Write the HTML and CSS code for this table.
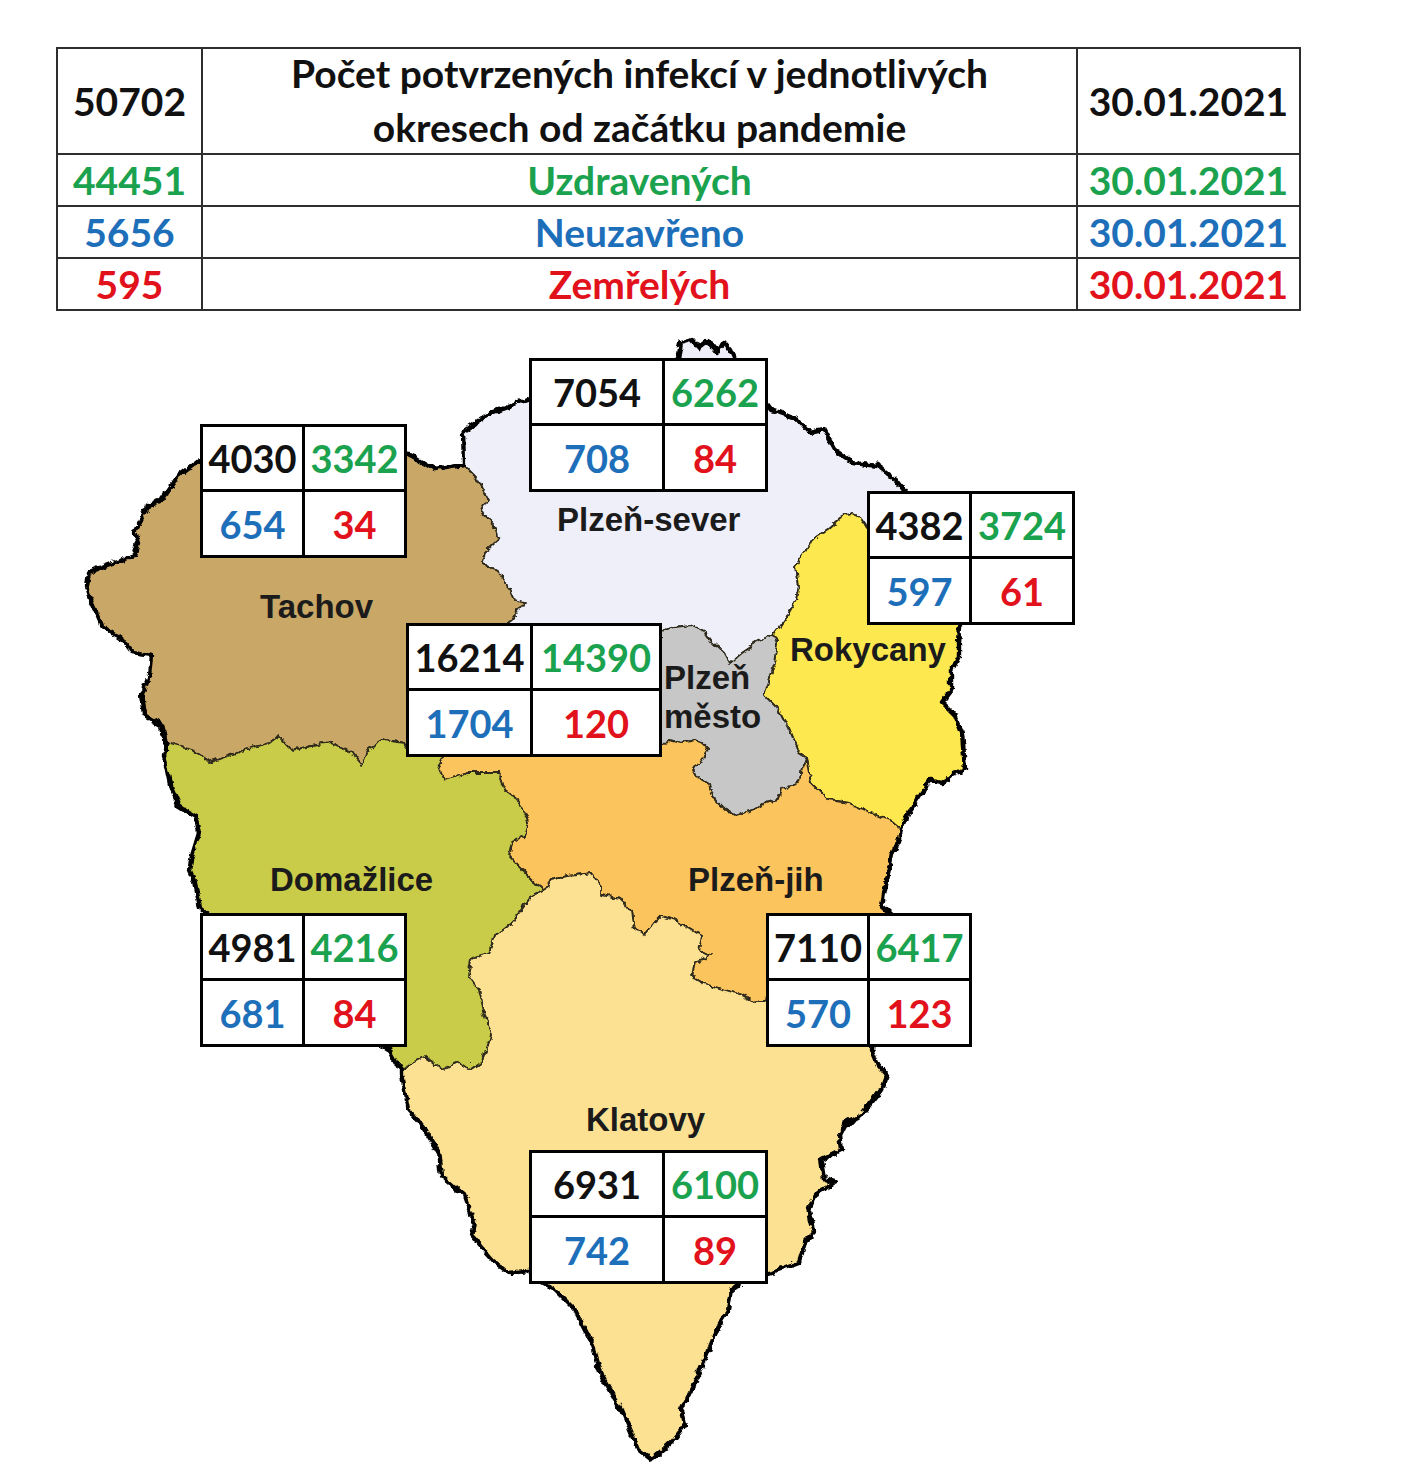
FILE: index.html
```html
<!DOCTYPE html>
<html lang="cs">
<head>
<meta charset="utf-8">
<title>Plzeňský kraj – počet potvrzených infekcí</title>
<link rel="stylesheet" href="styles.css">
</head>
<body>
<div class="page">
  <table class="summary">
    <colgroup><col class="col-num"><col class="col-title"><col class="col-date"></colgroup>
    <tr class="head">
      <td>50702</td>
      <td class="title"><span class="title-inner">Počet potvrzených infekcí v jednotlivých<br>okresech od začátku pandemie</span></td>
      <td>30.01.2021</td>
    </tr>
    <tr class="green"><td>44451</td><td>Uzdravených</td><td>30.01.2021</td></tr>
    <tr class="blue"><td>5656</td><td>Neuzavřeno</td><td>30.01.2021</td></tr>
    <tr class="red"><td>595</td><td>Zemřelých</td><td>30.01.2021</td></tr>
  </table>

  <div class="map">
    <svg class="regions" width="1405" height="1162" viewBox="0 320 1405 1162" xmlns="http://www.w3.org/2000/svg">
      <defs>
        <filter id="rough" x="0" y="320" width="1405" height="1162" filterUnits="userSpaceOnUse">
          <feTurbulence type="turbulence" baseFrequency="0.08" numOctaves="2" seed="7" result="noise"/>
          <feDisplacementMap in="SourceGraphic" in2="noise" scale="6" xChannelSelector="R" yChannelSelector="G"/>
        </filter>
      </defs>
      <g class="land" filter="url(#rough)">
        <g class="inner">
          <polygon class="r-tachov" points="462,462 473,473 487,497 480,510 493,523 497,537 483,550 480,560 497,570 507,583 513,597 523,600 510,617 503,622 520,700 406,745 403,740 383,737 367,747 360,763 350,750 330,740 310,743 290,747 277,733 267,740 243,747 227,753 207,760 190,747 165,740 160,723 143,713 140,693 148,673 150,653 130,650 120,637 100,623 90,600 85,583 87,570 113,560 133,553 137,540 133,530 147,503 160,497 177,473 198,457 300,440 407,452 413,455 433,467"/>
          <polygon class="r-sever" points="462,462 461,430 490,410 526,397 560,385 640,370 676,357 679,340 690,337 697,345 706,338 715,350 722,340 729,348 733,357 760,395 769,407 797,417 808,430 822,427 833,447 851,460 876,463 894,477 904,490 890,515 867,527 857,513 850,510 840,515 826,527 811,537 804,550 794,563 797,583 794,597 783,617 772,632 755,640 740,650 728,660 722,650 711,640 704,630 690,623 672,625 663,628 520,700 503,622 510,617 523,600 513,597 507,583 497,570 480,560 483,550 497,537 493,523 480,510 487,497 473,473"/>
          <polygon class="r-rokycany" points="890,515 958,624 957,640 957,653 950,667 950,687 940,700 953,713 960,730 963,767 950,773 940,780 930,778 920,790 907,810 900,827 887,817 870,810 847,800 827,797 810,780 805,755 797,750 787,727 780,713 775,705 763,693 768,675 773,660 776,640 772,632 783,617 794,597 797,583 794,563 804,550 811,537 826,527 840,515 850,510 857,513 867,527"/>
          <polygon class="r-mesto" points="663,628 672,625 690,623 704,630 711,640 722,650 728,660 740,650 755,640 772,632 776,640 773,660 768,675 763,693 775,705 780,713 787,727 797,750 805,755 800,767 797,780 780,787 777,797 763,800 750,807 733,813 723,807 713,797 707,783 697,777 693,767 700,757 707,747 700,740 693,737 680,740 667,737 663,742 600,720"/>
          <polygon class="r-jih" points="805,755 810,780 827,797 847,800 870,810 887,817 900,827 897,840 890,853 883,887 880,903 890,912 875,1000 767,997 753,1000 740,993 720,987 707,983 690,973 693,960 710,953 697,947 700,933 690,927 673,917 660,913 653,920 643,933 633,927 630,910 620,897 600,893 600,883 590,870 567,873 550,877 543,887 533,880 520,867 507,853 510,840 523,833 527,820 517,797 503,787 497,770 467,770 443,777 437,763 440,756 520,700 663,742 667,737 680,740 693,737 700,740 707,747 700,757 693,767 697,777 707,783 713,797 723,807 733,813 750,807 763,800 777,797 780,787 797,780 800,767"/>
          <polygon class="r-klatovy" points="543,887 550,877 567,873 590,870 600,883 600,893 620,897 630,910 633,927 643,933 653,920 660,913 673,917 690,927 700,933 697,947 710,953 693,960 690,973 707,983 720,987 740,993 753,1000 767,997 875,1000 870,1047 877,1063 885,1073 880,1087 870,1100 860,1113 843,1123 838,1133 840,1147 820,1157 823,1177 833,1180 815,1190 807,1207 813,1230 803,1240 797,1260 770,1270 740,1280 730,1287 727,1307 717,1323 710,1340 697,1373 680,1407 683,1423 670,1440 650,1457 637,1447 620,1407 600,1373 590,1340 573,1307 553,1287 540,1280 527,1268 507,1270 490,1257 470,1233 473,1220 463,1193 440,1173 437,1150 423,1127 407,1107 400,1073 400,1068 410,1060 423,1053 440,1067 457,1060 470,1067 480,1060 483,1053 490,1033 483,1013 477,987 467,973 470,957 487,950 493,933 510,920 520,907 530,893"/>
          <polygon class="r-domazlice" points="165,740 190,747 207,760 227,753 243,747 267,740 277,733 290,747 310,743 330,740 350,750 360,763 367,747 383,737 403,740 406,745 520,700 440,756 437,763 443,777 467,770 497,770 503,787 517,797 527,820 523,833 510,840 507,853 520,867 533,880 543,887 530,893 520,907 510,920 493,933 487,950 470,957 467,973 477,987 483,1013 490,1033 483,1053 480,1060 470,1067 457,1060 440,1067 423,1053 410,1060 400,1068 390,1050 385,1046 300,1000 198,905 197,900 193,880 187,867 190,853 197,830 193,813 177,803 170,787 167,773 163,753"/>
        </g>
        <polygon class="outline" points="165,740 163,740 160,723 143,713 140,693 148,673 150,653 130,650 120,637 100,623 90,600 85,583 87,570 113,560 133,553 137,540 133,530 147,503 160,497 177,473 198,457 300,440 407,452 413,455 433,467 462,462 461,430 490,410 526,397 560,385 640,370 676,357 679,340 690,337 697,345 706,338 715,350 722,340 729,348 733,357 760,395 769,407 797,417 808,430 822,427 833,447 851,460 876,463 894,477 904,490 890,515 958,624 957,640 957,653 950,667 950,687 940,700 953,713 960,730 963,767 950,773 940,780 930,778 920,790 907,810 900,827 897,840 890,853 883,887 880,903 890,912 875,1000 870,1047 877,1063 885,1073 880,1087 870,1100 860,1113 843,1123 838,1133 840,1147 820,1157 823,1177 833,1180 815,1190 807,1207 813,1230 803,1240 797,1260 770,1270 740,1280 730,1287 727,1307 717,1323 710,1340 697,1373 680,1407 683,1423 670,1440 650,1457 637,1447 620,1407 600,1373 590,1340 573,1307 553,1287 540,1280 527,1268 507,1270 490,1257 470,1233 473,1220 463,1193 440,1173 437,1150 423,1127 407,1107 400,1073 400,1068 390,1050 385,1046 300,1000 198,905 197,900 193,880 187,867 190,853 197,830 193,813 177,803 170,787 167,773 163,753"/>
      </g>
    </svg>

    <div class="lbl l-tachov">Tachov</div>
    <div class="lbl l-sever">Plzeň-sever</div>
    <div class="lbl l-rokycany">Rokycany</div>
    <div class="lbl l-plzen">Plzeň</div>
    <div class="lbl l-mesto">město</div>
    <div class="lbl l-domazlice">Domažlice</div>
    <div class="lbl l-jih">Plzeň-jih</div>
    <div class="lbl l-klatovy">Klatovy</div>

    <div class="box box-sm b-tachov"><span class="k">4030</span><span class="g">3342</span><span class="b">654</span><span class="r">34</span></div>
    <div class="box box-wide b-sever"><span class="k">7054</span><span class="g">6262</span><span class="b">708</span><span class="r">84</span></div>
    <div class="box box-ro b-rokycany"><span class="k">4382</span><span class="g">3724</span><span class="b">597</span><span class="r">61</span></div>
    <div class="box box-pm b-mesto"><span class="k">16214</span><span class="g">14390</span><span class="b">1704</span><span class="r">120</span></div>
    <div class="box box-sm b-domazlice"><span class="k">4981</span><span class="g">4216</span><span class="b">681</span><span class="r">84</span></div>
    <div class="box box-pj b-jih"><span class="k">7110</span><span class="g">6417</span><span class="b">570</span><span class="r">123</span></div>
    <div class="box box-wide b-klatovy"><span class="k">6931</span><span class="g">6100</span><span class="b">742</span><span class="r">89</span></div>
  </div>
</div>
</body>
</html>
```

FILE: styles.css
```css
* { box-sizing: border-box; }

body {
  margin: 0;
  background: #ffffff;
  font-family: Lato, "Open Sans", sans-serif;
  color: #111111;
}

.page { width: 1405px; }

/* ---------- summary table ---------- */
.summary {
  border-collapse: collapse;
  table-layout: fixed;
  width: 1243px;
  margin: 47px 0 0 56px;
  font-weight: 700;
  font-size: 39px;
}
.col-num { width: 145px; }
.col-title { width: 875px; }
.col-date { width: 223px; }

.summary td {
  border: 2px solid #2e2e2e;
  text-align: center;
  vertical-align: middle;
  padding: 0;
  height: 52px;
  line-height: 1;
}
.summary .head td { height: 105px; }
.summary .title { line-height: 54px; }
.title-inner { display: block; margin: -3px 0 -1px; }

.green td { color: #1ba24f; }
.blue td { color: #1e6fba; }
.red td { color: #e2121c; }

/* ---------- map canvas ---------- */
.map {
  position: relative;
  width: 1405px;
  height: 1162px;
  margin-top: 10px;
}
.regions { position: absolute; left: 0; top: 0; }
.inner polygon {
  stroke: #2f2a1c;
  stroke-width: 1.8;
  stroke-linejoin: round;
}
.r-tachov { fill: #c9a766; }
.r-sever { fill: #eeeff9; }
.r-rokycany { fill: #fde94f; }
.r-mesto { fill: #c7c7c7; }
.r-jih { fill: #fcc45c; }
.r-klatovy { fill: #fde192; }
.r-domazlice { fill: #c9cc4a; }
.outline {
  fill: none;
  stroke: #000000;
  stroke-width: 4.4;
  stroke-linejoin: round;
}

/* region names */
.lbl {
  position: absolute;
  font-family: "Liberation Sans", Arial, sans-serif;
  font-weight: 700;
  font-size: 33px;
  line-height: 33px;
  color: #1b1b1b;
  white-space: nowrap;
}
.l-tachov { left: 260px; top: 269px; }
.l-sever { left: 557px; top: 182px; }
.l-rokycany { left: 790px; top: 312px; }
.l-plzen { left: 664px; top: 340px; }
.l-mesto { left: 664px; top: 379px; }
.l-domazlice { left: 270px; top: 542px; }
.l-jih { left: 688px; top: 542px; }
.l-klatovy { left: 586px; top: 782px; }

/* stat boxes */
.box {
  position: absolute;
  display: grid;
  grid-template-rows: 62px 63px;
  gap: 3px;
  padding: 3px;
  background: #000000;
}
.box span {
  background: #ffffff;
  display: flex;
  align-items: center;
  justify-content: center;
  font-weight: 700;
  font-size: 38px;
  line-height: 1;
}
.box-sm { grid-template-columns: 99px 99px; }
.box-ro { grid-template-columns: 99px 100px; }
.box-pj { grid-template-columns: 98px 99px; }
.box-wide { grid-template-columns: 130px 100px; }
.box-pm { grid-template-columns: 121px 126px; }

.box .k { color: #111111; }
.box .g { color: #1ba24f; }
.box .b { color: #1e6fba; }
.box .r { color: #e2121c; }

.b-tachov { left: 200px; top: 103px; }
.b-sever { left: 529px; top: 37px; }
.b-rokycany { left: 867px; top: 170px; }
.b-mesto { left: 406px; top: 302px; }
.b-domazlice { left: 200px; top: 592px; }
.b-jih { left: 766px; top: 592px; }
.b-klatovy { left: 529px; top: 829px; }
```
